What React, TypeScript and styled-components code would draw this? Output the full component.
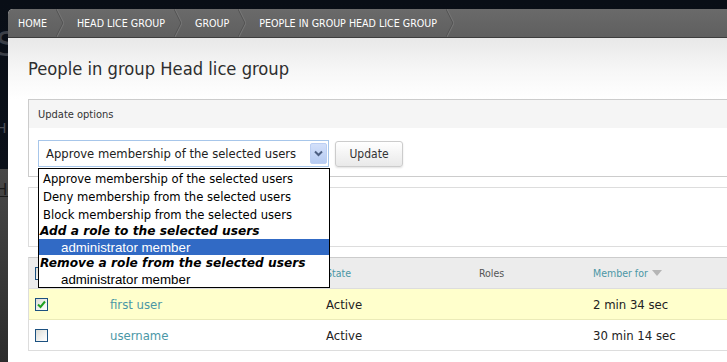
import React from "react";
import styled, { createGlobalStyle } from "styled-components";

const GlobalStyle = createGlobalStyle`
  html, body { margin: 0; padding: 0; }
  body {
    font-family: "DejaVu Sans Condensed", "DejaVu Sans", sans-serif;
    color: #222;
  }
`;

const Page = styled.div`
  display: flex;
  width: 727px;
  height: 362px;
  overflow: hidden;
  padding-top: 9px;
  box-sizing: border-box;
  background: linear-gradient(to bottom, #090e16 0, #0b1019 169px, #474747 169px, #2c2c2c 100%);
`;

const Backdrop = styled.div`
  width: 8px;
  flex: none;
  overflow: hidden;
  display: flex;
  flex-direction: column;
`;

const BackdropGlyph = styled.span<{ $top: number; $size: number; $color: string; $under?: boolean }>`
  margin-top: ${(p) => p.$top}px;
  margin-left: -4px;
  font-family: "DejaVu Sans", sans-serif;
  font-size: ${(p) => p.$size}px;
  line-height: 1;
  color: ${(p) => p.$color};
  text-decoration: ${(p) => (p.$under ? "underline" : "none")};
  white-space: nowrap;
`;

const Overlay = styled.div`
  flex: 1;
  min-width: 0;
  display: flex;
  flex-direction: column;
  background: #fff;
  border-top-left-radius: 5px;
`;

const Breadcrumb = styled.nav`
  display: flex;
  height: 28px;
  background: linear-gradient(to bottom, #6a6a6a, #5f5f5f);
  border-bottom: 1px solid #3d3d3d;
  border-top-left-radius: 5px;
`;

const Crumb = styled.a<{ $first?: boolean }>`
  display: flex;
  align-items: center;
  padding-left: ${(p) => (p.$first ? 10 : 13)}px;
  gap: 9px;
  color: #fff;
  font-size: 10.6px;
  text-transform: uppercase;
  text-decoration: none;
  white-space: nowrap;
`;

const Header = styled.div`
  height: 61px;
  box-sizing: border-box;
  padding: 20px 0 0 20px;
  background: linear-gradient(to bottom, #e8e8e8, #f7f7f7 55%, #fff);
`;

const Title = styled.h1`
  margin: 0;
  font-size: 18.2px;
  line-height: 22px;
  font-weight: normal;
  color: #2e2e2e;
`;

const Content = styled.div`
  padding-left: 20px;
  display: flex;
  flex-direction: column;
  gap: 10px;
`;

const Fieldset = styled.div`
  border: 1px solid #ccc;
  border-right: none;
`;

const Legend = styled.div`
  height: 28px;
  display: flex;
  align-items: center;
  padding-left: 9px;
  background: #f5f5f5;
  font-size: 11px;
  color: #333;
`;

const FieldBody = styled.div`
  display: flex;
  align-items: flex-start;
  gap: 6px;
  padding: 12px 0 9px 9px;
`;

const SelectWrap = styled.div`
  position: relative;
`;

const SelectBox = styled.div`
  width: 291px;
  height: 27px;
  box-sizing: border-box;
  border: 1px solid #a7c6ea;
  background: #fff;
  display: flex;
  align-items: center;
  justify-content: space-between;
  padding: 0 1px 0 7px;
  font-size: 12.9px;
  color: #222;
`;

const ArrowButton = styled.span`
  width: 17px;
  height: 21px;
  box-sizing: border-box;
  border: 1px solid #bccff3;
  border-radius: 2px;
  background: linear-gradient(to bottom, #d3e0fa, #b6cbf2);
  display: flex;
  align-items: center;
  justify-content: center;
`;

const DropList = styled.ul`
  position: absolute;
  top: 28px;
  left: 0;
  width: 292px;
  box-sizing: border-box;
  margin: 0;
  padding: 0;
  list-style: none;
  background: #fff;
  border: 1px solid #000;
  z-index: 5;
`;

const Option = styled.li`
  height: 18px;
  display: flex;
  align-items: center;
  padding-left: 4px;
  font-size: 12.9px;
  color: #000;
  white-space: nowrap;
`;

const GroupLabel = styled.li`
  height: 16px;
  display: flex;
  align-items: center;
  padding-left: 1px;
  font-family: "DejaVu Sans", sans-serif;
  font-size: 12.2px;
  font-weight: bold;
  font-style: italic;
  color: #000;
  white-space: nowrap;
`;

const GroupOption = styled.li<{ $selected?: boolean }>`
  height: 16px;
  display: flex;
  align-items: center;
  padding-left: 22px;
  font-family: "Liberation Sans", Arial, sans-serif;
  font-size: 13.3px;
  background: ${(p) => (p.$selected ? "#316ac5" : "transparent")};
  color: ${(p) => (p.$selected ? "#fff" : "#000")};
`;

const Button = styled.button`
  margin-top: 1px;
  width: 68px;
  height: 26px;
  border: 1px solid #ccc;
  border-radius: 3px;
  background: linear-gradient(to bottom, #fff, #e9e9e9);
  box-shadow: 0 1px 2px rgba(0, 0, 0, 0.12);
  font-family: inherit;
  font-size: 12px;
  color: #333;
  padding: 0;
`;

const EmptyBox = styled.div`
  height: 58px;
  border: 1px solid #ddd;
  border-right: none;
`;

const Table = styled.div`
  border-top: 1px solid #ccc;
  border-left: 1px solid #ddd;
`;

const Row = styled.div<{ $variant: "head" | "selected" | "plain" }>`
  display: grid;
  grid-template-columns: 75px 216px 153px 114px 1fr;
  height: 30px;
  align-items: center;
  background: ${(p) => (p.$variant === "head" ? "#ececec" : p.$variant === "selected" ? "#ffffcc" : "#fff")};
  border-bottom: 1px solid ${(p) => (p.$variant === "selected" ? "#ebebb8" : "#ddd")};
`;

const Cell = styled.div<{ $link?: boolean; $small?: boolean }>`
  padding-left: 6px;
  display: flex;
  align-items: center;
  font-size: ${(p) => (p.$small ? 10.5 : 13)}px;
  color: ${(p) => (p.$link ? "#4b97a6" : p.$small ? "#555" : "#222")};
  white-space: nowrap;
`;

const SortArrow = styled.span`
  margin-left: 4px;
  width: 0;
  height: 0;
  border-left: 5px solid transparent;
  border-right: 5px solid transparent;
  border-top: 6px solid #b5b5b5;
`;

const Check = styled.span`
  width: 13px;
  height: 13px;
  box-sizing: border-box;
  border: 1px solid #1c5180;
  background: linear-gradient(135deg, #dcdcd6 0%, #f3f3f1 60%, #fff 100%);
  display: flex;
  align-items: center;
  justify-content: center;
`;

const Chevron = () => (
  <svg width="8" height="28" viewBox="0 0 8 28">
    <polyline points="0,0 7,14 0,28" fill="none" stroke="#505050" strokeWidth="1" />
    <polyline points="1,0 8,14 1,28" fill="none" stroke="#777" strokeWidth="1" />
  </svg>
);

const Checkbox = ({ checked }: { checked?: boolean }) => (
  <Check>
    {checked && (
      <svg width="9" height="9" viewBox="0 0 9 9">
        <path d="M1 4.5 L3.5 7 L8 1.5" fill="none" stroke="#21a121" strokeWidth="2" />
      </svg>
    )}
  </Check>
);

const crumbs = ["Home", "Head lice group", "Group", "People in group Head lice group"];

const members = [
  { name: "first user", state: "Active", since: "2 min 34 sec", checked: true },
  { name: "username", state: "Active", since: "30 min 14 sec", checked: false },
];

const App = () => {
  return (
    <>
      <GlobalStyle />
      <Page>
        <Backdrop>
          <BackdropGlyph $top={18} $size={34} $color="#3b3f47">S</BackdropGlyph>
          <BackdropGlyph $top={60} $size={14} $color="#4a4d55">H</BackdropGlyph>
          <BackdropGlyph $top={48} $size={15} $color="#1a1a1a" $under>Ho</BackdropGlyph>
        </Backdrop>
        <Overlay>
          <Breadcrumb>
            {crumbs.map((c, i) => (
              <Crumb key={c} $first={i === 0}>
                {c}
                <Chevron />
              </Crumb>
            ))}
          </Breadcrumb>
          <Header>
            <Title>People in group Head lice group</Title>
          </Header>
          <Content>
            <Fieldset>
              <Legend>Update options</Legend>
              <FieldBody>
                <SelectWrap>
                  <SelectBox>
                    Approve membership of the selected users
                    <ArrowButton>
                      <svg width="9" height="7" viewBox="0 0 9 7">
                        <path d="M1 1.5 L4.5 5 L8 1.5" fill="none" stroke="#4d5f82" strokeWidth="2" />
                      </svg>
                    </ArrowButton>
                  </SelectBox>
                  <DropList>
                    <Option>Approve membership of the selected users</Option>
                    <Option>Deny membership from the selected users</Option>
                    <Option>Block membership from the selected users</Option>
                    <GroupLabel>Add a role to the selected users</GroupLabel>
                    <GroupOption $selected>administrator member</GroupOption>
                    <GroupLabel>Remove a role from the selected users</GroupLabel>
                    <GroupOption>administrator member</GroupOption>
                  </DropList>
                </SelectWrap>
                <Button>Update</Button>
              </FieldBody>
            </Fieldset>
            <EmptyBox />
            <Table>
              <Row $variant="head">
                <Cell>
                  <Checkbox />
                </Cell>
                <Cell />
                <Cell $small $link>State</Cell>
                <Cell $small>Roles</Cell>
                <Cell $small $link>
                  Member for
                  <SortArrow />
                </Cell>
              </Row>
              {members.map((m) => (
                <Row key={m.name} $variant={m.checked ? "selected" : "plain"}>
                  <Cell>
                    <Checkbox checked={m.checked} />
                  </Cell>
                  <Cell $link>{m.name}</Cell>
                  <Cell>{m.state}</Cell>
                  <Cell />
                  <Cell>{m.since}</Cell>
                </Row>
              ))}
            </Table>
          </Content>
        </Overlay>
      </Page>
    </>
  );
};

export default App;
